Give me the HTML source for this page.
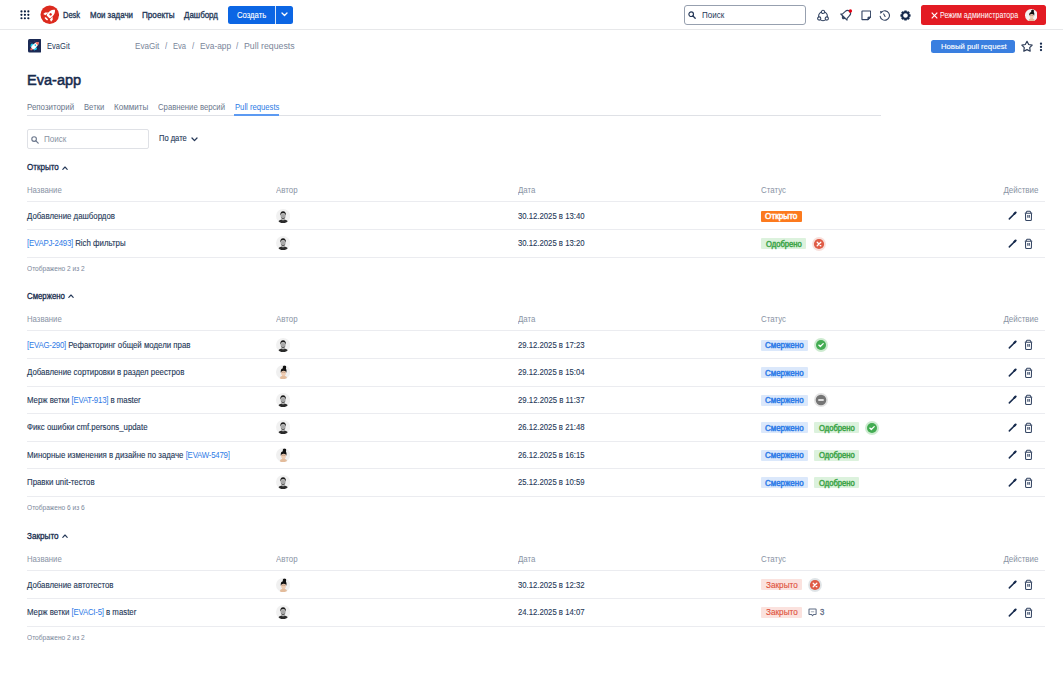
<!DOCTYPE html><html><head><meta charset="utf-8"><style>
*{box-sizing:border-box;margin:0;padding:0}
html,body{width:1063px;height:692px;overflow:hidden;background:#fff;font-family:"Liberation Sans",sans-serif;color:#172b4d}
.t{position:absolute;white-space:nowrap}
.a{position:absolute}
.ln{position:absolute;left:27px;width:1018px;height:1px;background:#ebecf0}
.lz{position:absolute;height:11px;border-radius:1px}
</style></head><body>
<div class="a" style="left:0;top:29px;width:1063px;height:1px;background:#e7e8ea"></div>
<svg class="a" style="left:19.5px;top:10px" width="10" height="10" viewBox="0 0 10 10" fill="#091e42"><circle cx="1.45" cy="1.47" r="1.1"/><circle cx="1.45" cy="4.86" r="1.1"/><circle cx="1.45" cy="8.25" r="1.1"/><circle cx="4.90" cy="1.47" r="1.1"/><circle cx="4.90" cy="4.86" r="1.1"/><circle cx="4.90" cy="8.25" r="1.1"/><circle cx="8.35" cy="1.47" r="1.1"/><circle cx="8.35" cy="4.86" r="1.1"/><circle cx="8.35" cy="8.25" r="1.1"/></svg>
<svg class="a" style="left:39.5px;top:5px" width="19.5" height="19.5" viewBox="0 0 20 20">
<circle cx="10" cy="10" r="9.5" fill="#dc2a1e"/>
<g transform="translate(8.6 11.9) rotate(44)" fill="#fff">
<path d="M0 -9.6 C2.7 -7.8 3.4 -4.2 2.7 -0.6 Q2.5 0.5 1.6 0.5 L-1.6 0.5 Q-2.5 0.5 -2.7 -0.6 C-3.4 -4.2 -2.7 -7.8 0 -9.6 Z"/>
<path d="M-3.0 -3.0 L-5.4 -0.8 L-5.6 1.8 L-3.2 1.0 Z"/>
<path d="M3.0 -3.0 L5.4 -0.8 L5.6 1.8 L3.2 1.0 Z"/>
<rect x="-1.9" y="2.3" width="3.8" height="1.5" rx=".6"/>
<circle cx="0" cy="-3.3" r="1.3" fill="#dc2a1e"/>
</g>
</svg>
<div class="t" style="left:63.2px;transform-origin:left top;top:10.74px;font-size:8.532px;line-height:9.81px;color:#253858;font-weight:normal;transform:scaleX(0.8812);-webkit-text-stroke:0.32px #253858;">Desk</div>
<div class="t" style="left:90px;transform-origin:left top;top:10.74px;font-size:8.532px;line-height:9.81px;color:#253858;font-weight:normal;transform:scaleX(0.9244);-webkit-text-stroke:0.32px #253858;">Мои задачи</div>
<div class="t" style="left:142.4px;transform-origin:left top;top:10.74px;font-size:8.532px;line-height:9.81px;color:#253858;font-weight:normal;transform:scaleX(0.9540);-webkit-text-stroke:0.32px #253858;">Проекты</div>
<div class="t" style="left:184px;transform-origin:left top;top:10.74px;font-size:8.532px;line-height:9.81px;color:#253858;font-weight:normal;transform:scaleX(0.9323);-webkit-text-stroke:0.32px #253858;">Дашборд</div>
<div class="a" style="left:227.5px;top:6px;width:65.5px;height:17.5px;background:#0c66e4;border-radius:2.5px"></div>
<div class="a" style="left:275px;top:6px;width:1px;height:17.5px;background:#fff;opacity:.85"></div>
<div class="t" style="left:236.7px;transform-origin:left top;top:10.64px;font-size:8.532px;line-height:9.81px;color:#fff;font-weight:normal;transform:scaleX(0.9019);-webkit-text-stroke:0.1px #fff;">Создать</div>
<svg class="a" style="left:281px;top:12px" width="7" height="5" viewBox="0 0 7 5"><path d="M1 1 L3.5 3.5 L6 1" fill="none" stroke="#fff" stroke-width="1.3" stroke-linecap="round" stroke-linejoin="round"/></svg>
<div class="a" style="left:683.5px;top:5px;width:122.3px;height:19.5px;border:1px solid #97a0af;border-radius:3px"></div>
<svg class="a" style="left:688px;top:10.5px" width="8" height="8" viewBox="0 0 8 8"><circle cx="3.2" cy="3.2" r="2.3" fill="none" stroke="#253858" stroke-width="1.2"/><path d="M5 5 L7.2 7.2" stroke="#253858" stroke-width="1.3" stroke-linecap="round"/></svg>
<div class="t" style="left:701.7px;transform-origin:left top;top:10.54px;font-size:8.532px;line-height:9.81px;color:#253858;font-weight:normal;transform:scaleX(0.9403);">Поиск</div>
<svg class="a" style="left:816px;top:8.5px" width="14" height="13" viewBox="0 0 14 13" fill="none" stroke="#344563" stroke-width="1.1">
<circle cx="7" cy="7.3" r="4.4"/>
<circle cx="7" cy="2.9" r="1.6" fill="#fff"/><circle cx="3.2" cy="9.5" r="1.6" fill="#fff"/><circle cx="10.8" cy="9.5" r="1.6" fill="#fff"/>
</svg>
<svg class="a" style="left:839px;top:7.5px" width="14" height="14" viewBox="-7 -7 14 14">
<g transform="rotate(45)">
<path d="M-4.4 3 L-3.2 1.6 L-3 -2 Q-3 -5 0 -5.2 Q3 -5 3 -2 L3.2 1.6 L4.4 3 Z" fill="none" stroke="#344563" stroke-width="1.1" stroke-linejoin="round"/>
<path d="M-2.6 2.5 L2.6 2.5 Q1.6 5.4 0 5.4 Q-1.6 5.4 -2.6 2.5 Z" fill="#344563"/>
</g>
<circle cx="4.4" cy="-4" r="1.7" fill="#e60012"/>
</svg>
<svg class="a" style="left:860.6px;top:10.1px" width="10.6" height="10.6" viewBox="0 0 11 11" fill="none" stroke="#344563" stroke-width="1.15" stroke-linejoin="round">
<path d="M1 1.5 Q1 1 1.5 1 L9.5 1 Q10 1 10 1.5 L10 7.2 L7.2 10 L1.5 10 Q1 10 1 9.5 Z"/>
<path d="M10 7.2 L7.4 7.6 L7.2 10 Z" fill="#344563"/>
</svg>
<svg class="a" style="left:879px;top:9.7px" width="12" height="12" viewBox="0 0 12 12" fill="none" stroke="#344563" stroke-width="1.1" stroke-linecap="round">
<path d="M2.48 2.18 A4.7 4.7 0 1 1 1.17 6.32"/>
<path d="M1.0 1.0 L3.7 1.7 L1.5 3.9 Z" fill="#344563" stroke="none"/>
<path d="M4.7 3.9 L6.1 6.5"/>
</svg>
<svg class="a" style="left:899.5px;top:9.5px" width="11" height="11" viewBox="-5.5 -5.5 11 11"><g fill="#172b4d"><rect x="-1.25" y="-5.1" width="2.5" height="2.4" rx=".4" transform="rotate(0)"/><rect x="-1.25" y="-5.1" width="2.5" height="2.4" rx=".4" transform="rotate(45)"/><rect x="-1.25" y="-5.1" width="2.5" height="2.4" rx=".4" transform="rotate(90)"/><rect x="-1.25" y="-5.1" width="2.5" height="2.4" rx=".4" transform="rotate(135)"/><rect x="-1.25" y="-5.1" width="2.5" height="2.4" rx=".4" transform="rotate(180)"/><rect x="-1.25" y="-5.1" width="2.5" height="2.4" rx=".4" transform="rotate(225)"/><rect x="-1.25" y="-5.1" width="2.5" height="2.4" rx=".4" transform="rotate(270)"/><rect x="-1.25" y="-5.1" width="2.5" height="2.4" rx=".4" transform="rotate(315)"/></g><circle r="3.3" fill="none" stroke="#172b4d" stroke-width="1.9"/></svg>
<div class="a" style="left:921px;top:5px;width:124.5px;height:20px;background:#e31b23;border-radius:2.5px"></div>
<svg class="a" style="left:931px;top:11.5px" width="7" height="7" viewBox="0 0 7 7"><path d="M.7 .7 L6.3 6.3 M6.3 .7 L.7 6.3" stroke="#fff" stroke-width="1.2"/></svg>
<div class="t" style="left:940.4px;transform-origin:left top;top:10.74px;font-size:8.208px;line-height:9.44px;color:#fff;font-weight:normal;transform:scaleX(0.8666);">Режим администратора</div>
<svg class="a" style="left:1024.9px;top:8.5px" width="12.6" height="12.6" viewBox="0 0 14 14">
<defs><clipPath id="cw103114"><circle cx="7" cy="7" r="7"/></clipPath></defs>
<g clip-path="url(#cw103114)"><rect width="14" height="14" fill="#f4f4f4"/>
<path d="M3.4 14.2 Q3.8 10.9 6.2 10.5 L8.6 10.5 Q11 10.9 11.2 14.2 Z" fill="#e3bc9c"/>
<path d="M6.3 8.6 L8.5 8.6 L8.7 11 Q7.4 11.8 6.1 11 Z" fill="#e6bd9d"/>
<ellipse cx="7.4" cy="7.6" rx="2.45" ry="2.9" fill="#efcdb3"/>
<path d="M4.7 7.6 Q4.3 3.6 6.8 3.2 Q6.2 0.8 8.6 0.6 Q10.6 0.9 9.8 3.4 Q10.8 4.6 10.2 7.6 Q9.8 5.4 7.4 5.6 Q5.2 5.6 4.7 7.6 Z" fill="#121212"/>
<path d="M5.6 7.4 Q7.4 6.6 9.2 7.4" fill="none" stroke="#6b4a3a" stroke-width=".35"/>
</g></svg>
<svg class="a" style="left:27.6px;top:39.2px" width="13.6" height="13.6" viewBox="0 0 14 14">
<rect x="0" y="0" width="14" height="14" rx="1.6" fill="#1b2a55"/>
<circle cx="3" cy="3.4" r=".35" fill="#6d7ba8"/><circle cx="11.4" cy="10.8" r=".35" fill="#6d7ba8"/><circle cx="6.8" cy="2" r=".3" fill="#6d7ba8"/>
<g transform="translate(6.9 7.1) rotate(45)">
<path d="M-2.8 1.4 L-3.6 3.6 L-1.2 3.2 Z M2.8 1.4 L3.6 3.6 L1.2 3.2 Z" fill="#19c6e6"/>
<circle cx="-2.5" cy="1.3" r="1.5" fill="#19c6e6"/><circle cx="2.5" cy="1.3" r="1.5" fill="#19c6e6"/>
<path d="M0 -5.6 C1.9 -4.4 2.3 -1.2 2.0 2.6 L1.2 4.0 L-1.2 4.0 L-2.0 2.6 C-2.3 -1.2 -1.9 -4.4 0 -5.6 Z" fill="#fff"/>
<path d="M0 -5.6 C1.3 -4.8 1.8 -3.6 1.9 -2.8 L-1.9 -2.8 C-1.8 -3.6 -1.3 -4.8 0 -5.6 Z" fill="#f36a5a"/>
<path d="M-1.3 4.0 L1.3 4.0 L0.6 6.0 L-0.6 6.0 Z" fill="#f36a5a"/>
<circle cx="0" cy="-1" r=".9" fill="#19c6e6"/>
</g>
</svg>
<div class="t" style="left:46.95px;transform-origin:left top;top:42.14px;font-size:8.64px;line-height:9.94px;color:#253858;font-weight:normal;transform:scaleX(0.8787);">EvaGit</div>
<div class="t" style="left:134.8px;transform-origin:left top;top:40.94px;font-size:8.748px;line-height:10.06px;color:#7a869a;font-weight:normal;transform:scaleX(0.9268);">EvaGit</div>
<div class="t" style="left:164.9px;transform-origin:left top;top:40.94px;font-size:8.748px;line-height:10.06px;color:#7a869a;font-weight:normal;transform:scaleX(0.9259);">/</div>
<div class="t" style="left:172.9px;transform-origin:left top;top:40.94px;font-size:8.748px;line-height:10.06px;color:#7a869a;font-weight:normal;transform:scaleX(0.8697);">Eva</div>
<div class="t" style="left:192.1px;transform-origin:left top;top:40.94px;font-size:8.748px;line-height:10.06px;color:#7a869a;font-weight:normal;transform:scaleX(0.9259);">/</div>
<div class="t" style="left:199.9px;transform-origin:left top;top:40.94px;font-size:8.748px;line-height:10.06px;color:#7a869a;font-weight:normal;transform:scaleX(0.9586);">Eva-app</div>
<div class="t" style="left:236.1px;transform-origin:left top;top:40.94px;font-size:8.748px;line-height:10.06px;color:#7a869a;font-weight:normal;transform:scaleX(0.9259);">/</div>
<div class="t" style="left:244.4px;transform-origin:left top;top:40.94px;font-size:8.748px;line-height:10.06px;color:#7a869a;font-weight:normal;transform:scaleX(1.0040);">Pull requests</div>
<div class="a" style="left:931.2px;top:39.7px;width:84px;height:13.2px;background:#3a7fe0;border-radius:2.5px"></div>
<div class="t" style="left:940.6px;transform-origin:left top;top:41.74px;font-size:7.992px;line-height:9.19px;color:#fff;font-weight:normal;transform:scaleX(0.9640);-webkit-text-stroke:0.12px #fff;">Новый pull request</div>
<svg class="a" style="left:1020.9px;top:40px" width="12" height="13" viewBox="0 0 12 13"><path d="M6.00 1.32 L7.68 4.46 L11.18 5.09 L8.71 7.65 L9.20 11.18 L6.00 9.62 L2.80 11.18 L3.29 7.65 L0.82 5.09 L4.32 4.46 Z" fill="none" stroke="#2b3a55" stroke-width="1.15" stroke-linejoin="round"/></svg>
<svg class="a" style="left:1038.55px;top:41.5px" width="4" height="10" viewBox="0 0 4 10" fill="#172b4d"><circle cx="2" cy="1.7" r="1.15"/><circle cx="2" cy="4.9" r="1.15"/><circle cx="2" cy="8.05" r="1.15"/></svg>
<div class="t" style="left:27.4px;transform-origin:left top;top:70.97px;font-size:15.228px;line-height:17.51px;color:#172b4d;font-weight:normal;transform:scaleX(0.9561);-webkit-text-stroke:0.55px #172b4d;">Eva-app</div>
<div class="t" style="left:26.9px;transform-origin:left top;top:102.84px;font-size:8.64px;line-height:9.94px;color:#6b778c;font-weight:normal;transform:scaleX(0.9162);">Репозиторий</div>
<div class="t" style="left:83.5px;transform-origin:left top;top:102.84px;font-size:8.64px;line-height:9.94px;color:#6b778c;font-weight:normal;transform:scaleX(0.8899);">Ветки</div>
<div class="t" style="left:114px;transform-origin:left top;top:102.84px;font-size:8.64px;line-height:9.94px;color:#6b778c;font-weight:normal;transform:scaleX(0.9357);">Коммиты</div>
<div class="t" style="left:158px;transform-origin:left top;top:102.84px;font-size:8.64px;line-height:9.94px;color:#6b778c;font-weight:normal;transform:scaleX(0.8961);">Сравнение версий</div>
<div class="t" style="left:234.6px;transform-origin:left top;top:102.84px;font-size:8.64px;line-height:9.94px;color:#2d7be5;font-weight:normal;transform:scaleX(0.8905);">Pull requests</div>
<div class="a" style="left:27px;top:114.5px;width:854px;height:1px;background:#dfe1e6"></div>
<div class="a" style="left:234.3px;top:114px;width:45.2px;height:1.5px;background:#5c9af2"></div>
<div class="a" style="left:26.6px;top:129px;width:122px;height:20px;border:1px solid #dfe1e6;border-radius:2px"></div>
<svg class="a" style="left:30.5px;top:135.5px" width="8" height="8" viewBox="0 0 8 8"><circle cx="3.1" cy="3.1" r="2.3" fill="none" stroke="#6b778c" stroke-width="1.1"/><path d="M4.9 4.9 L7.2 7.2" stroke="#6b778c" stroke-width="1.2" stroke-linecap="round"/></svg>
<div class="t" style="left:43.5px;transform-origin:left top;top:133.94px;font-size:8.748px;line-height:10.06px;color:#8993a4;font-weight:normal;transform:scaleX(0.9259);">Поиск</div>
<div class="t" style="left:158.8px;transform-origin:left top;top:134.28px;font-size:8.154px;line-height:9.38px;color:#253858;font-weight:normal;transform:scaleX(0.9259);-webkit-text-stroke:0.12px #253858;">По дате</div>
<svg class="a" style="left:190.5px;top:136.5px" width="7" height="5" viewBox="0 0 7 5"><path d="M1 1 L3.5 3.6 L6 1" fill="none" stroke="#253858" stroke-width="1.3" stroke-linecap="round" stroke-linejoin="round"/></svg>
<div class="t" style="left:27px;transform-origin:left top;top:162.94px;font-size:8.424px;line-height:9.69px;color:#172b4d;font-weight:normal;transform:scaleX(0.9573);-webkit-text-stroke:0.3px #172b4d;">Открыто</div>
<svg class="a" style="left:62.199999999999996px;top:165.5px" width="6" height="4" viewBox="0 0 6 4"><path d="M0.8 3.3 L3 1.0 L5.2 3.3" fill="none" stroke="#253858" stroke-width="1.15" stroke-linecap="round" stroke-linejoin="round"/></svg>
<div class="t" style="left:26.9px;transform-origin:left top;top:186.44px;font-size:8.532px;line-height:9.81px;color:#8993a4;font-weight:normal;transform:scaleX(0.9117);">Название</div>
<div class="t" style="left:275.8px;transform-origin:left top;top:186.44px;font-size:8.532px;line-height:9.81px;color:#8993a4;font-weight:normal;transform:scaleX(0.9259);">Автор</div>
<div class="t" style="left:518.2px;transform-origin:left top;top:186.44px;font-size:8.532px;line-height:9.81px;color:#8993a4;font-weight:normal;transform:scaleX(0.9259);">Дата</div>
<div class="t" style="left:761px;transform-origin:left top;top:186.44px;font-size:8.532px;line-height:9.81px;color:#8993a4;font-weight:normal;transform:scaleX(0.9259);">Статус</div>
<div class="t" style="right:24.59999999999991px;transform-origin:right top;top:186.44px;font-size:8.532px;line-height:9.81px;color:#8993a4;font-weight:normal;transform:scaleX(0.9349);">Действие</div>
<div class="ln" style="top:201.20px"></div>
<div class="t" style="left:27px;transform-origin:left top;top:211.89px;font-size:8.478px;line-height:9.75px;color:#253858;font-weight:normal;transform:scaleX(0.9259);-webkit-text-stroke:0.12px #253858;">Добавление дашбордов</div>
<svg class="a" style="left:275.59999999999997px;top:208.70000000000002px" width="14.2" height="14.2" viewBox="0 0 14 14">
<defs><clipPath id="cm282215"><circle cx="7" cy="7" r="7"/></clipPath></defs>
<g clip-path="url(#cm282215)"><rect width="14" height="14" fill="#f1f1f1"/>
<path d="M2.0 13.4 Q2.4 10.9 5.6 10.4 L8.4 10.4 Q11.6 10.9 12.0 13.4 Q7 15.2 2.0 13.4 Z" fill="#2b2b2b"/>
<path d="M5.8 9 L8.2 9 L8.4 10.8 Q7 11.6 5.6 10.8 Z" fill="#b5b5b5"/>
<ellipse cx="7" cy="6.6" rx="2.45" ry="3.0" fill="#a8a8a8"/>
<path d="M4.2 6.4 Q3.9 2.2 7 2.1 Q10.1 2.2 9.8 6.4 Q9.4 4.4 7 4.5 Q4.6 4.4 4.2 6.4 Z" fill="#1c1c1c"/>
<path d="M5.0 4.6 Q7 3.8 9.0 4.6 L9 5.3 Q7 4.8 5 5.3Z" fill="#e8e8e8"/>
<path d="M4.9 7.8 Q7 10.4 9.1 7.8 Q8.8 9.8 7 9.9 Q5.2 9.8 4.9 7.8Z" fill="#3a3a3a"/>
</g></svg>
<div class="t" style="left:518.3px;transform-origin:left top;top:211.88px;font-size:8.37px;line-height:9.63px;color:#253858;font-weight:normal;transform:scaleX(0.9256);-webkit-text-stroke:0.1px #253858;">30.12.2025 в 13:40</div>
<div class="lz" style="left:761px;top:210.60px;width:41px;background:#fc7a1e"></div>
<div class="t" style="left:765.3px;transform-origin:left top;top:212.14px;font-size:8.316px;line-height:9.56px;color:#fff;font-weight:normal;transform:scaleX(0.9879);-webkit-text-stroke:0.48px #fff;">Открыто</div>
<svg class="a" style="left:1007.5px;top:211.30px" width="9" height="9" viewBox="0 0 9 9"><path d="M1.3 7.9 L7.2 2.0" stroke="#172b4d" stroke-width="1.5" stroke-linecap="round"/><path d="M6.4 2.8 L7.6 1.6" stroke="#172b4d" stroke-width="2.1" stroke-linecap="round"/></svg>
<svg class="a" style="left:1024px;top:210.30px" width="9" height="11" viewBox="0 0 9 11" fill="none" stroke="#344563" stroke-width="1.05" stroke-linejoin="round">
<path d="M.8 3.2 L8.2 3.2 M1.8 3.0 L3.0 1.3 L6.0 1.3 L7.2 3.0"/>
<path d="M1.5 3.4 L1.6 9.6 Q1.7 10.4 2.5 10.4 L6.5 10.4 Q7.3 10.4 7.4 9.6 L7.5 3.4"/>
<path d="M3.3 5.0 L3.3 7.8 H4.3 V5.0 Z M4.8 5.0 L4.8 7.8 H5.8 V5.0 Z" fill="#344563" stroke="none"/>
</svg>
<div class="ln" style="top:229.30px"></div>
<div class="t" style="left:27px;transform-origin:left top;top:239.39px;font-size:8.478px;line-height:9.75px;color:#253858;font-weight:normal;transform:scaleX(0.9259);-webkit-text-stroke:0.12px #253858;"><span style="color:#2f7be6;-webkit-text-stroke:0;letter-spacing:-0.24px">[EVAPJ-2493]</span> Rich фильтры</div>
<svg class="a" style="left:275.59999999999997px;top:236.20000000000002px" width="14.2" height="14.2" viewBox="0 0 14 14">
<defs><clipPath id="cm282243"><circle cx="7" cy="7" r="7"/></clipPath></defs>
<g clip-path="url(#cm282243)"><rect width="14" height="14" fill="#f1f1f1"/>
<path d="M2.0 13.4 Q2.4 10.9 5.6 10.4 L8.4 10.4 Q11.6 10.9 12.0 13.4 Q7 15.2 2.0 13.4 Z" fill="#2b2b2b"/>
<path d="M5.8 9 L8.2 9 L8.4 10.8 Q7 11.6 5.6 10.8 Z" fill="#b5b5b5"/>
<ellipse cx="7" cy="6.6" rx="2.45" ry="3.0" fill="#a8a8a8"/>
<path d="M4.2 6.4 Q3.9 2.2 7 2.1 Q10.1 2.2 9.8 6.4 Q9.4 4.4 7 4.5 Q4.6 4.4 4.2 6.4 Z" fill="#1c1c1c"/>
<path d="M5.0 4.6 Q7 3.8 9.0 4.6 L9 5.3 Q7 4.8 5 5.3Z" fill="#e8e8e8"/>
<path d="M4.9 7.8 Q7 10.4 9.1 7.8 Q8.8 9.8 7 9.9 Q5.2 9.8 4.9 7.8Z" fill="#3a3a3a"/>
</g></svg>
<div class="t" style="left:518.3px;transform-origin:left top;top:239.38px;font-size:8.37px;line-height:9.63px;color:#253858;font-weight:normal;transform:scaleX(0.9256);-webkit-text-stroke:0.1px #253858;">30.12.2025 в 13:20</div>
<div class="lz" style="left:761px;top:238.10px;width:45px;background:#dcf2dd"></div>
<div class="t" style="left:765.6px;transform-origin:left top;top:239.64px;font-size:8.316px;line-height:9.56px;color:#3ea54a;font-weight:normal;transform:scaleX(0.9202);-webkit-text-stroke:0.48px #3ea54a;">Одобрено</div>
<svg class="a" style="left:811.5px;top:236.70000000000002px" width="14" height="14" viewBox="0 0 14 14"><circle cx="7" cy="7" r="6.9" fill="#f8e0dc"/><circle cx="7" cy="7" r="5.1" fill="#df5b45"/><path d="M5.2 5.2 L8.8 8.8 M8.8 5.2 L5.2 8.8" stroke="#fff" stroke-width="1.3" stroke-linecap="round"/></svg>
<svg class="a" style="left:1007.5px;top:238.80px" width="9" height="9" viewBox="0 0 9 9"><path d="M1.3 7.9 L7.2 2.0" stroke="#172b4d" stroke-width="1.5" stroke-linecap="round"/><path d="M6.4 2.8 L7.6 1.6" stroke="#172b4d" stroke-width="2.1" stroke-linecap="round"/></svg>
<svg class="a" style="left:1024px;top:237.80px" width="9" height="11" viewBox="0 0 9 11" fill="none" stroke="#344563" stroke-width="1.05" stroke-linejoin="round">
<path d="M.8 3.2 L8.2 3.2 M1.8 3.0 L3.0 1.3 L6.0 1.3 L7.2 3.0"/>
<path d="M1.5 3.4 L1.6 9.6 Q1.7 10.4 2.5 10.4 L6.5 10.4 Q7.3 10.4 7.4 9.6 L7.5 3.4"/>
<path d="M3.3 5.0 L3.3 7.8 H4.3 V5.0 Z M4.8 5.0 L4.8 7.8 H5.8 V5.0 Z" fill="#344563" stroke="none"/>
</svg>
<div class="ln" style="top:256.80px"></div>
<div class="t" style="left:26.9px;transform-origin:left top;top:265.28px;font-size:7.074px;line-height:8.14px;color:#7a869a;font-weight:normal;transform:scaleX(0.9339);">Отображено 2 из 2</div>
<div class="t" style="left:27px;transform-origin:left top;top:291.84px;font-size:8.424px;line-height:9.69px;color:#172b4d;font-weight:normal;transform:scaleX(0.9283);-webkit-text-stroke:0.3px #172b4d;">Смержено</div>
<svg class="a" style="left:68.30000000000001px;top:294.4px" width="6" height="4" viewBox="0 0 6 4"><path d="M0.8 3.3 L3 1.0 L5.2 3.3" fill="none" stroke="#253858" stroke-width="1.15" stroke-linecap="round" stroke-linejoin="round"/></svg>
<div class="t" style="left:26.9px;transform-origin:left top;top:315.34px;font-size:8.532px;line-height:9.81px;color:#8993a4;font-weight:normal;transform:scaleX(0.9117);">Название</div>
<div class="t" style="left:275.8px;transform-origin:left top;top:315.34px;font-size:8.532px;line-height:9.81px;color:#8993a4;font-weight:normal;transform:scaleX(0.9259);">Автор</div>
<div class="t" style="left:518.2px;transform-origin:left top;top:315.34px;font-size:8.532px;line-height:9.81px;color:#8993a4;font-weight:normal;transform:scaleX(0.9259);">Дата</div>
<div class="t" style="left:761px;transform-origin:left top;top:315.34px;font-size:8.532px;line-height:9.81px;color:#8993a4;font-weight:normal;transform:scaleX(0.9259);">Статус</div>
<div class="t" style="right:24.59999999999991px;transform-origin:right top;top:315.34px;font-size:8.532px;line-height:9.81px;color:#8993a4;font-weight:normal;transform:scaleX(0.9349);">Действие</div>
<div class="ln" style="top:330.10px"></div>
<div class="t" style="left:27px;transform-origin:left top;top:340.79px;font-size:8.478px;line-height:9.75px;color:#253858;font-weight:normal;transform:scaleX(0.9259);-webkit-text-stroke:0.12px #253858;"><span style="color:#2f7be6;-webkit-text-stroke:0;letter-spacing:-0.24px">[EVAG-290]</span> Рефакторинг общей модели прав</div>
<svg class="a" style="left:275.59999999999997px;top:337.59999999999997px" width="14.2" height="14.2" viewBox="0 0 14 14">
<defs><clipPath id="cm282344"><circle cx="7" cy="7" r="7"/></clipPath></defs>
<g clip-path="url(#cm282344)"><rect width="14" height="14" fill="#f1f1f1"/>
<path d="M2.0 13.4 Q2.4 10.9 5.6 10.4 L8.4 10.4 Q11.6 10.9 12.0 13.4 Q7 15.2 2.0 13.4 Z" fill="#2b2b2b"/>
<path d="M5.8 9 L8.2 9 L8.4 10.8 Q7 11.6 5.6 10.8 Z" fill="#b5b5b5"/>
<ellipse cx="7" cy="6.6" rx="2.45" ry="3.0" fill="#a8a8a8"/>
<path d="M4.2 6.4 Q3.9 2.2 7 2.1 Q10.1 2.2 9.8 6.4 Q9.4 4.4 7 4.5 Q4.6 4.4 4.2 6.4 Z" fill="#1c1c1c"/>
<path d="M5.0 4.6 Q7 3.8 9.0 4.6 L9 5.3 Q7 4.8 5 5.3Z" fill="#e8e8e8"/>
<path d="M4.9 7.8 Q7 10.4 9.1 7.8 Q8.8 9.8 7 9.9 Q5.2 9.8 4.9 7.8Z" fill="#3a3a3a"/>
</g></svg>
<div class="t" style="left:518.3px;transform-origin:left top;top:340.78px;font-size:8.37px;line-height:9.63px;color:#253858;font-weight:normal;transform:scaleX(0.9256);-webkit-text-stroke:0.1px #253858;">29.12.2025 в 17:23</div>
<div class="lz" style="left:761px;top:339.50px;width:47.4px;background:#dbe8fb"></div>
<div class="t" style="left:765.4px;transform-origin:left top;top:341.04px;font-size:8.316px;line-height:9.56px;color:#2e7ce8;font-weight:normal;transform:scaleX(0.9579);-webkit-text-stroke:0.48px #2e7ce8;">Смержено</div>
<svg class="a" style="left:813.9000000000001px;top:338.09999999999997px" width="14" height="14" viewBox="0 0 14 14"><circle cx="7" cy="7" r="7" fill="#cdebd0"/><circle cx="7" cy="7" r="5.0" fill="#43ac52"/><path d="M4.8 7.1 L6.3 8.5 L9.2 5.6" fill="none" stroke="#fff" stroke-width="1.3" stroke-linecap="round" stroke-linejoin="round"/></svg>
<svg class="a" style="left:1007.5px;top:340.20px" width="9" height="9" viewBox="0 0 9 9"><path d="M1.3 7.9 L7.2 2.0" stroke="#172b4d" stroke-width="1.5" stroke-linecap="round"/><path d="M6.4 2.8 L7.6 1.6" stroke="#172b4d" stroke-width="2.1" stroke-linecap="round"/></svg>
<svg class="a" style="left:1024px;top:339.20px" width="9" height="11" viewBox="0 0 9 11" fill="none" stroke="#344563" stroke-width="1.05" stroke-linejoin="round">
<path d="M.8 3.2 L8.2 3.2 M1.8 3.0 L3.0 1.3 L6.0 1.3 L7.2 3.0"/>
<path d="M1.5 3.4 L1.6 9.6 Q1.7 10.4 2.5 10.4 L6.5 10.4 Q7.3 10.4 7.4 9.6 L7.5 3.4"/>
<path d="M3.3 5.0 L3.3 7.8 H4.3 V5.0 Z M4.8 5.0 L4.8 7.8 H5.8 V5.0 Z" fill="#344563" stroke="none"/>
</svg>
<div class="ln" style="top:358.20px"></div>
<div class="t" style="left:27px;transform-origin:left top;top:368.29px;font-size:8.478px;line-height:9.75px;color:#253858;font-weight:normal;transform:scaleX(0.9259);-webkit-text-stroke:0.12px #253858;">Добавление сортировки в раздел реестров</div>
<svg class="a" style="left:275.59999999999997px;top:365.09999999999997px" width="14.2" height="14.2" viewBox="0 0 14 14">
<defs><clipPath id="cw282372"><circle cx="7" cy="7" r="7"/></clipPath></defs>
<g clip-path="url(#cw282372)"><rect width="14" height="14" fill="#f0f0f0"/>
<path d="M3.4 14.2 Q3.8 10.9 6.2 10.5 L8.6 10.5 Q11 10.9 11.2 14.2 Z" fill="#e3bc9c"/>
<path d="M6.3 8.6 L8.5 8.6 L8.7 11 Q7.4 11.8 6.1 11 Z" fill="#e6bd9d"/>
<ellipse cx="7.4" cy="7.6" rx="2.45" ry="2.9" fill="#efcdb3"/>
<path d="M4.7 7.6 Q4.3 3.6 6.8 3.2 Q6.2 0.8 8.6 0.6 Q10.6 0.9 9.8 3.4 Q10.8 4.6 10.2 7.6 Q9.8 5.4 7.4 5.6 Q5.2 5.6 4.7 7.6 Z" fill="#121212"/>
<path d="M5.6 7.4 Q7.4 6.6 9.2 7.4" fill="none" stroke="#6b4a3a" stroke-width=".35"/>
</g></svg>
<div class="t" style="left:518.3px;transform-origin:left top;top:368.28px;font-size:8.37px;line-height:9.63px;color:#253858;font-weight:normal;transform:scaleX(0.9256);-webkit-text-stroke:0.1px #253858;">29.12.2025 в 15:04</div>
<div class="lz" style="left:761px;top:367.00px;width:47.4px;background:#dbe8fb"></div>
<div class="t" style="left:765.4px;transform-origin:left top;top:368.54px;font-size:8.316px;line-height:9.56px;color:#2e7ce8;font-weight:normal;transform:scaleX(0.9579);-webkit-text-stroke:0.48px #2e7ce8;">Смержено</div>
<svg class="a" style="left:1007.5px;top:367.70px" width="9" height="9" viewBox="0 0 9 9"><path d="M1.3 7.9 L7.2 2.0" stroke="#172b4d" stroke-width="1.5" stroke-linecap="round"/><path d="M6.4 2.8 L7.6 1.6" stroke="#172b4d" stroke-width="2.1" stroke-linecap="round"/></svg>
<svg class="a" style="left:1024px;top:366.70px" width="9" height="11" viewBox="0 0 9 11" fill="none" stroke="#344563" stroke-width="1.05" stroke-linejoin="round">
<path d="M.8 3.2 L8.2 3.2 M1.8 3.0 L3.0 1.3 L6.0 1.3 L7.2 3.0"/>
<path d="M1.5 3.4 L1.6 9.6 Q1.7 10.4 2.5 10.4 L6.5 10.4 Q7.3 10.4 7.4 9.6 L7.5 3.4"/>
<path d="M3.3 5.0 L3.3 7.8 H4.3 V5.0 Z M4.8 5.0 L4.8 7.8 H5.8 V5.0 Z" fill="#344563" stroke="none"/>
</svg>
<div class="ln" style="top:385.70px"></div>
<div class="t" style="left:27px;transform-origin:left top;top:395.79px;font-size:8.478px;line-height:9.75px;color:#253858;font-weight:normal;transform:scaleX(0.9259);-webkit-text-stroke:0.12px #253858;">Мерж ветки <span style="color:#2f7be6;-webkit-text-stroke:0;letter-spacing:-0.24px">[EVAT-913]</span> в master</div>
<svg class="a" style="left:275.59999999999997px;top:392.59999999999997px" width="14.2" height="14.2" viewBox="0 0 14 14">
<defs><clipPath id="cm282399"><circle cx="7" cy="7" r="7"/></clipPath></defs>
<g clip-path="url(#cm282399)"><rect width="14" height="14" fill="#f1f1f1"/>
<path d="M2.0 13.4 Q2.4 10.9 5.6 10.4 L8.4 10.4 Q11.6 10.9 12.0 13.4 Q7 15.2 2.0 13.4 Z" fill="#2b2b2b"/>
<path d="M5.8 9 L8.2 9 L8.4 10.8 Q7 11.6 5.6 10.8 Z" fill="#b5b5b5"/>
<ellipse cx="7" cy="6.6" rx="2.45" ry="3.0" fill="#a8a8a8"/>
<path d="M4.2 6.4 Q3.9 2.2 7 2.1 Q10.1 2.2 9.8 6.4 Q9.4 4.4 7 4.5 Q4.6 4.4 4.2 6.4 Z" fill="#1c1c1c"/>
<path d="M5.0 4.6 Q7 3.8 9.0 4.6 L9 5.3 Q7 4.8 5 5.3Z" fill="#e8e8e8"/>
<path d="M4.9 7.8 Q7 10.4 9.1 7.8 Q8.8 9.8 7 9.9 Q5.2 9.8 4.9 7.8Z" fill="#3a3a3a"/>
</g></svg>
<div class="t" style="left:518.3px;transform-origin:left top;top:395.78px;font-size:8.37px;line-height:9.63px;color:#253858;font-weight:normal;transform:scaleX(0.9335);-webkit-text-stroke:0.1px #253858;">29.12.2025 в 11:37</div>
<div class="lz" style="left:761px;top:394.50px;width:47.4px;background:#dbe8fb"></div>
<div class="t" style="left:765.4px;transform-origin:left top;top:396.04px;font-size:8.316px;line-height:9.56px;color:#2e7ce8;font-weight:normal;transform:scaleX(0.9579);-webkit-text-stroke:0.48px #2e7ce8;">Смержено</div>
<svg class="a" style="left:813.9000000000001px;top:393.09999999999997px" width="14" height="14" viewBox="0 0 14 14"><circle cx="7" cy="7" r="7" fill="#e2e2e2"/><circle cx="7" cy="7" r="5.3" fill="#757575"/><path d="M4.8 7 L9.2 7" stroke="#fff" stroke-width="1.5" stroke-linecap="round"/></svg>
<svg class="a" style="left:1007.5px;top:395.20px" width="9" height="9" viewBox="0 0 9 9"><path d="M1.3 7.9 L7.2 2.0" stroke="#172b4d" stroke-width="1.5" stroke-linecap="round"/><path d="M6.4 2.8 L7.6 1.6" stroke="#172b4d" stroke-width="2.1" stroke-linecap="round"/></svg>
<svg class="a" style="left:1024px;top:394.20px" width="9" height="11" viewBox="0 0 9 11" fill="none" stroke="#344563" stroke-width="1.05" stroke-linejoin="round">
<path d="M.8 3.2 L8.2 3.2 M1.8 3.0 L3.0 1.3 L6.0 1.3 L7.2 3.0"/>
<path d="M1.5 3.4 L1.6 9.6 Q1.7 10.4 2.5 10.4 L6.5 10.4 Q7.3 10.4 7.4 9.6 L7.5 3.4"/>
<path d="M3.3 5.0 L3.3 7.8 H4.3 V5.0 Z M4.8 5.0 L4.8 7.8 H5.8 V5.0 Z" fill="#344563" stroke="none"/>
</svg>
<div class="ln" style="top:413.20px"></div>
<div class="t" style="left:27px;transform-origin:left top;top:423.29px;font-size:8.478px;line-height:9.75px;color:#253858;font-weight:normal;transform:scaleX(0.9259);-webkit-text-stroke:0.12px #253858;">Фикс ошибки cmf.persons_update</div>
<svg class="a" style="left:275.59999999999997px;top:420.09999999999997px" width="14.2" height="14.2" viewBox="0 0 14 14">
<defs><clipPath id="cm282427"><circle cx="7" cy="7" r="7"/></clipPath></defs>
<g clip-path="url(#cm282427)"><rect width="14" height="14" fill="#f1f1f1"/>
<path d="M2.0 13.4 Q2.4 10.9 5.6 10.4 L8.4 10.4 Q11.6 10.9 12.0 13.4 Q7 15.2 2.0 13.4 Z" fill="#2b2b2b"/>
<path d="M5.8 9 L8.2 9 L8.4 10.8 Q7 11.6 5.6 10.8 Z" fill="#b5b5b5"/>
<ellipse cx="7" cy="6.6" rx="2.45" ry="3.0" fill="#a8a8a8"/>
<path d="M4.2 6.4 Q3.9 2.2 7 2.1 Q10.1 2.2 9.8 6.4 Q9.4 4.4 7 4.5 Q4.6 4.4 4.2 6.4 Z" fill="#1c1c1c"/>
<path d="M5.0 4.6 Q7 3.8 9.0 4.6 L9 5.3 Q7 4.8 5 5.3Z" fill="#e8e8e8"/>
<path d="M4.9 7.8 Q7 10.4 9.1 7.8 Q8.8 9.8 7 9.9 Q5.2 9.8 4.9 7.8Z" fill="#3a3a3a"/>
</g></svg>
<div class="t" style="left:518.3px;transform-origin:left top;top:423.28px;font-size:8.37px;line-height:9.63px;color:#253858;font-weight:normal;transform:scaleX(0.9256);-webkit-text-stroke:0.1px #253858;">26.12.2025 в 21:48</div>
<div class="lz" style="left:761px;top:422.00px;width:47.4px;background:#dbe8fb"></div>
<div class="t" style="left:765.4px;transform-origin:left top;top:423.54px;font-size:8.316px;line-height:9.56px;color:#2e7ce8;font-weight:normal;transform:scaleX(0.9579);-webkit-text-stroke:0.48px #2e7ce8;">Смержено</div>
<div class="lz" style="left:814.2px;top:422.00px;width:45px;background:#dcf2dd"></div>
<div class="t" style="left:818.8000000000001px;transform-origin:left top;top:423.54px;font-size:8.316px;line-height:9.56px;color:#3ea54a;font-weight:normal;transform:scaleX(0.9202);-webkit-text-stroke:0.48px #3ea54a;">Одобрено</div>
<svg class="a" style="left:864.7px;top:420.59999999999997px" width="14" height="14" viewBox="0 0 14 14"><circle cx="7" cy="7" r="7" fill="#cdebd0"/><circle cx="7" cy="7" r="5.0" fill="#43ac52"/><path d="M4.8 7.1 L6.3 8.5 L9.2 5.6" fill="none" stroke="#fff" stroke-width="1.3" stroke-linecap="round" stroke-linejoin="round"/></svg>
<svg class="a" style="left:1007.5px;top:422.70px" width="9" height="9" viewBox="0 0 9 9"><path d="M1.3 7.9 L7.2 2.0" stroke="#172b4d" stroke-width="1.5" stroke-linecap="round"/><path d="M6.4 2.8 L7.6 1.6" stroke="#172b4d" stroke-width="2.1" stroke-linecap="round"/></svg>
<svg class="a" style="left:1024px;top:421.70px" width="9" height="11" viewBox="0 0 9 11" fill="none" stroke="#344563" stroke-width="1.05" stroke-linejoin="round">
<path d="M.8 3.2 L8.2 3.2 M1.8 3.0 L3.0 1.3 L6.0 1.3 L7.2 3.0"/>
<path d="M1.5 3.4 L1.6 9.6 Q1.7 10.4 2.5 10.4 L6.5 10.4 Q7.3 10.4 7.4 9.6 L7.5 3.4"/>
<path d="M3.3 5.0 L3.3 7.8 H4.3 V5.0 Z M4.8 5.0 L4.8 7.8 H5.8 V5.0 Z" fill="#344563" stroke="none"/>
</svg>
<div class="ln" style="top:440.70px"></div>
<div class="t" style="left:27px;transform-origin:left top;top:450.79px;font-size:8.478px;line-height:9.75px;color:#253858;font-weight:normal;transform:scaleX(0.9259);-webkit-text-stroke:0.12px #253858;">Минорные изменения в дизайне по задаче <span style="color:#2f7be6;-webkit-text-stroke:0;letter-spacing:-0.24px">[EVAW-5479]</span></div>
<svg class="a" style="left:275.59999999999997px;top:447.59999999999997px" width="14.2" height="14.2" viewBox="0 0 14 14">
<defs><clipPath id="cw282454"><circle cx="7" cy="7" r="7"/></clipPath></defs>
<g clip-path="url(#cw282454)"><rect width="14" height="14" fill="#f0f0f0"/>
<path d="M3.4 14.2 Q3.8 10.9 6.2 10.5 L8.6 10.5 Q11 10.9 11.2 14.2 Z" fill="#e3bc9c"/>
<path d="M6.3 8.6 L8.5 8.6 L8.7 11 Q7.4 11.8 6.1 11 Z" fill="#e6bd9d"/>
<ellipse cx="7.4" cy="7.6" rx="2.45" ry="2.9" fill="#efcdb3"/>
<path d="M4.7 7.6 Q4.3 3.6 6.8 3.2 Q6.2 0.8 8.6 0.6 Q10.6 0.9 9.8 3.4 Q10.8 4.6 10.2 7.6 Q9.8 5.4 7.4 5.6 Q5.2 5.6 4.7 7.6 Z" fill="#121212"/>
<path d="M5.6 7.4 Q7.4 6.6 9.2 7.4" fill="none" stroke="#6b4a3a" stroke-width=".35"/>
</g></svg>
<div class="t" style="left:518.3px;transform-origin:left top;top:450.78px;font-size:8.37px;line-height:9.63px;color:#253858;font-weight:normal;transform:scaleX(0.9256);-webkit-text-stroke:0.1px #253858;">26.12.2025 в 16:15</div>
<div class="lz" style="left:761px;top:449.50px;width:47.4px;background:#dbe8fb"></div>
<div class="t" style="left:765.4px;transform-origin:left top;top:451.04px;font-size:8.316px;line-height:9.56px;color:#2e7ce8;font-weight:normal;transform:scaleX(0.9579);-webkit-text-stroke:0.48px #2e7ce8;">Смержено</div>
<div class="lz" style="left:814.2px;top:449.50px;width:45px;background:#dcf2dd"></div>
<div class="t" style="left:818.8000000000001px;transform-origin:left top;top:451.04px;font-size:8.316px;line-height:9.56px;color:#3ea54a;font-weight:normal;transform:scaleX(0.9202);-webkit-text-stroke:0.48px #3ea54a;">Одобрено</div>
<svg class="a" style="left:1007.5px;top:450.20px" width="9" height="9" viewBox="0 0 9 9"><path d="M1.3 7.9 L7.2 2.0" stroke="#172b4d" stroke-width="1.5" stroke-linecap="round"/><path d="M6.4 2.8 L7.6 1.6" stroke="#172b4d" stroke-width="2.1" stroke-linecap="round"/></svg>
<svg class="a" style="left:1024px;top:449.20px" width="9" height="11" viewBox="0 0 9 11" fill="none" stroke="#344563" stroke-width="1.05" stroke-linejoin="round">
<path d="M.8 3.2 L8.2 3.2 M1.8 3.0 L3.0 1.3 L6.0 1.3 L7.2 3.0"/>
<path d="M1.5 3.4 L1.6 9.6 Q1.7 10.4 2.5 10.4 L6.5 10.4 Q7.3 10.4 7.4 9.6 L7.5 3.4"/>
<path d="M3.3 5.0 L3.3 7.8 H4.3 V5.0 Z M4.8 5.0 L4.8 7.8 H5.8 V5.0 Z" fill="#344563" stroke="none"/>
</svg>
<div class="ln" style="top:468.20px"></div>
<div class="t" style="left:27px;transform-origin:left top;top:478.29px;font-size:8.478px;line-height:9.75px;color:#253858;font-weight:normal;transform:scaleX(0.9259);-webkit-text-stroke:0.12px #253858;">Правки unit-тестов</div>
<svg class="a" style="left:275.59999999999997px;top:475.09999999999997px" width="14.2" height="14.2" viewBox="0 0 14 14">
<defs><clipPath id="cm282482"><circle cx="7" cy="7" r="7"/></clipPath></defs>
<g clip-path="url(#cm282482)"><rect width="14" height="14" fill="#f1f1f1"/>
<path d="M2.0 13.4 Q2.4 10.9 5.6 10.4 L8.4 10.4 Q11.6 10.9 12.0 13.4 Q7 15.2 2.0 13.4 Z" fill="#2b2b2b"/>
<path d="M5.8 9 L8.2 9 L8.4 10.8 Q7 11.6 5.6 10.8 Z" fill="#b5b5b5"/>
<ellipse cx="7" cy="6.6" rx="2.45" ry="3.0" fill="#a8a8a8"/>
<path d="M4.2 6.4 Q3.9 2.2 7 2.1 Q10.1 2.2 9.8 6.4 Q9.4 4.4 7 4.5 Q4.6 4.4 4.2 6.4 Z" fill="#1c1c1c"/>
<path d="M5.0 4.6 Q7 3.8 9.0 4.6 L9 5.3 Q7 4.8 5 5.3Z" fill="#e8e8e8"/>
<path d="M4.9 7.8 Q7 10.4 9.1 7.8 Q8.8 9.8 7 9.9 Q5.2 9.8 4.9 7.8Z" fill="#3a3a3a"/>
</g></svg>
<div class="t" style="left:518.3px;transform-origin:left top;top:478.28px;font-size:8.37px;line-height:9.63px;color:#253858;font-weight:normal;transform:scaleX(0.9256);-webkit-text-stroke:0.1px #253858;">25.12.2025 в 10:59</div>
<div class="lz" style="left:761px;top:477.00px;width:47.4px;background:#dbe8fb"></div>
<div class="t" style="left:765.4px;transform-origin:left top;top:478.54px;font-size:8.316px;line-height:9.56px;color:#2e7ce8;font-weight:normal;transform:scaleX(0.9579);-webkit-text-stroke:0.48px #2e7ce8;">Смержено</div>
<div class="lz" style="left:814.2px;top:477.00px;width:45px;background:#dcf2dd"></div>
<div class="t" style="left:818.8000000000001px;transform-origin:left top;top:478.54px;font-size:8.316px;line-height:9.56px;color:#3ea54a;font-weight:normal;transform:scaleX(0.9202);-webkit-text-stroke:0.48px #3ea54a;">Одобрено</div>
<svg class="a" style="left:1007.5px;top:477.70px" width="9" height="9" viewBox="0 0 9 9"><path d="M1.3 7.9 L7.2 2.0" stroke="#172b4d" stroke-width="1.5" stroke-linecap="round"/><path d="M6.4 2.8 L7.6 1.6" stroke="#172b4d" stroke-width="2.1" stroke-linecap="round"/></svg>
<svg class="a" style="left:1024px;top:476.70px" width="9" height="11" viewBox="0 0 9 11" fill="none" stroke="#344563" stroke-width="1.05" stroke-linejoin="round">
<path d="M.8 3.2 L8.2 3.2 M1.8 3.0 L3.0 1.3 L6.0 1.3 L7.2 3.0"/>
<path d="M1.5 3.4 L1.6 9.6 Q1.7 10.4 2.5 10.4 L6.5 10.4 Q7.3 10.4 7.4 9.6 L7.5 3.4"/>
<path d="M3.3 5.0 L3.3 7.8 H4.3 V5.0 Z M4.8 5.0 L4.8 7.8 H5.8 V5.0 Z" fill="#344563" stroke="none"/>
</svg>
<div class="ln" style="top:495.70px"></div>
<div class="t" style="left:26.9px;transform-origin:left top;top:504.18px;font-size:7.074px;line-height:8.14px;color:#7a869a;font-weight:normal;transform:scaleX(0.9339);">Отображено 6 из 6</div>
<div class="t" style="left:27px;transform-origin:left top;top:531.74px;font-size:8.424px;line-height:9.69px;color:#172b4d;font-weight:normal;transform:scaleX(0.9695);-webkit-text-stroke:0.3px #172b4d;">Закрыто</div>
<svg class="a" style="left:62.0px;top:534.3000000000001px" width="6" height="4" viewBox="0 0 6 4"><path d="M0.8 3.3 L3 1.0 L5.2 3.3" fill="none" stroke="#253858" stroke-width="1.15" stroke-linecap="round" stroke-linejoin="round"/></svg>
<div class="t" style="left:26.9px;transform-origin:left top;top:555.24px;font-size:8.532px;line-height:9.81px;color:#8993a4;font-weight:normal;transform:scaleX(0.9117);">Название</div>
<div class="t" style="left:275.8px;transform-origin:left top;top:555.24px;font-size:8.532px;line-height:9.81px;color:#8993a4;font-weight:normal;transform:scaleX(0.9259);">Автор</div>
<div class="t" style="left:518.2px;transform-origin:left top;top:555.24px;font-size:8.532px;line-height:9.81px;color:#8993a4;font-weight:normal;transform:scaleX(0.9259);">Дата</div>
<div class="t" style="left:761px;transform-origin:left top;top:555.24px;font-size:8.532px;line-height:9.81px;color:#8993a4;font-weight:normal;transform:scaleX(0.9259);">Статус</div>
<div class="t" style="right:24.59999999999991px;transform-origin:right top;top:555.24px;font-size:8.532px;line-height:9.81px;color:#8993a4;font-weight:normal;transform:scaleX(0.9349);">Действие</div>
<div class="ln" style="top:570.00px"></div>
<div class="t" style="left:27px;transform-origin:left top;top:580.69px;font-size:8.478px;line-height:9.75px;color:#253858;font-weight:normal;transform:scaleX(0.9259);-webkit-text-stroke:0.12px #253858;">Добавление автотестов</div>
<svg class="a" style="left:275.59999999999997px;top:577.5px" width="14.2" height="14.2" viewBox="0 0 14 14">
<defs><clipPath id="cw282584"><circle cx="7" cy="7" r="7"/></clipPath></defs>
<g clip-path="url(#cw282584)"><rect width="14" height="14" fill="#f0f0f0"/>
<path d="M3.4 14.2 Q3.8 10.9 6.2 10.5 L8.6 10.5 Q11 10.9 11.2 14.2 Z" fill="#e3bc9c"/>
<path d="M6.3 8.6 L8.5 8.6 L8.7 11 Q7.4 11.8 6.1 11 Z" fill="#e6bd9d"/>
<ellipse cx="7.4" cy="7.6" rx="2.45" ry="2.9" fill="#efcdb3"/>
<path d="M4.7 7.6 Q4.3 3.6 6.8 3.2 Q6.2 0.8 8.6 0.6 Q10.6 0.9 9.8 3.4 Q10.8 4.6 10.2 7.6 Q9.8 5.4 7.4 5.6 Q5.2 5.6 4.7 7.6 Z" fill="#121212"/>
<path d="M5.6 7.4 Q7.4 6.6 9.2 7.4" fill="none" stroke="#6b4a3a" stroke-width=".35"/>
</g></svg>
<div class="t" style="left:518.3px;transform-origin:left top;top:580.68px;font-size:8.37px;line-height:9.63px;color:#253858;font-weight:normal;transform:scaleX(0.9256);-webkit-text-stroke:0.1px #253858;">30.12.2025 в 12:32</div>
<div class="lz" style="left:761px;top:579.40px;width:41px;background:#fbe2de"></div>
<div class="t" style="left:765.6px;transform-origin:left top;top:580.94px;font-size:8.316px;line-height:9.56px;color:#e0523c;font-weight:normal;transform:scaleX(0.9889);-webkit-text-stroke:0.12px #e0523c;">Закрыто</div>
<svg class="a" style="left:807.5px;top:578.0px" width="14" height="14" viewBox="0 0 14 14"><circle cx="7" cy="7" r="6.9" fill="#dfe4e7"/><circle cx="7" cy="7" r="5.1" fill="#df5b45"/><path d="M5.2 5.2 L8.8 8.8 M8.8 5.2 L5.2 8.8" stroke="#fff" stroke-width="1.3" stroke-linecap="round"/></svg>
<svg class="a" style="left:1007.5px;top:580.10px" width="9" height="9" viewBox="0 0 9 9"><path d="M1.3 7.9 L7.2 2.0" stroke="#172b4d" stroke-width="1.5" stroke-linecap="round"/><path d="M6.4 2.8 L7.6 1.6" stroke="#172b4d" stroke-width="2.1" stroke-linecap="round"/></svg>
<svg class="a" style="left:1024px;top:579.10px" width="9" height="11" viewBox="0 0 9 11" fill="none" stroke="#344563" stroke-width="1.05" stroke-linejoin="round">
<path d="M.8 3.2 L8.2 3.2 M1.8 3.0 L3.0 1.3 L6.0 1.3 L7.2 3.0"/>
<path d="M1.5 3.4 L1.6 9.6 Q1.7 10.4 2.5 10.4 L6.5 10.4 Q7.3 10.4 7.4 9.6 L7.5 3.4"/>
<path d="M3.3 5.0 L3.3 7.8 H4.3 V5.0 Z M4.8 5.0 L4.8 7.8 H5.8 V5.0 Z" fill="#344563" stroke="none"/>
</svg>
<div class="ln" style="top:598.10px"></div>
<div class="t" style="left:27px;transform-origin:left top;top:608.19px;font-size:8.478px;line-height:9.75px;color:#253858;font-weight:normal;transform:scaleX(0.9259);-webkit-text-stroke:0.12px #253858;">Мерж ветки <span style="color:#2f7be6;-webkit-text-stroke:0;letter-spacing:-0.24px">[EVACI-5]</span> в master</div>
<svg class="a" style="left:275.59999999999997px;top:605.0px" width="14.2" height="14.2" viewBox="0 0 14 14">
<defs><clipPath id="cm282612"><circle cx="7" cy="7" r="7"/></clipPath></defs>
<g clip-path="url(#cm282612)"><rect width="14" height="14" fill="#f1f1f1"/>
<path d="M2.0 13.4 Q2.4 10.9 5.6 10.4 L8.4 10.4 Q11.6 10.9 12.0 13.4 Q7 15.2 2.0 13.4 Z" fill="#2b2b2b"/>
<path d="M5.8 9 L8.2 9 L8.4 10.8 Q7 11.6 5.6 10.8 Z" fill="#b5b5b5"/>
<ellipse cx="7" cy="6.6" rx="2.45" ry="3.0" fill="#a8a8a8"/>
<path d="M4.2 6.4 Q3.9 2.2 7 2.1 Q10.1 2.2 9.8 6.4 Q9.4 4.4 7 4.5 Q4.6 4.4 4.2 6.4 Z" fill="#1c1c1c"/>
<path d="M5.0 4.6 Q7 3.8 9.0 4.6 L9 5.3 Q7 4.8 5 5.3Z" fill="#e8e8e8"/>
<path d="M4.9 7.8 Q7 10.4 9.1 7.8 Q8.8 9.8 7 9.9 Q5.2 9.8 4.9 7.8Z" fill="#3a3a3a"/>
</g></svg>
<div class="t" style="left:518.3px;transform-origin:left top;top:608.18px;font-size:8.37px;line-height:9.63px;color:#253858;font-weight:normal;transform:scaleX(0.9256);-webkit-text-stroke:0.1px #253858;">24.12.2025 в 14:07</div>
<div class="lz" style="left:761px;top:606.90px;width:41px;background:#fbe2de"></div>
<div class="t" style="left:765.6px;transform-origin:left top;top:608.44px;font-size:8.316px;line-height:9.56px;color:#e0523c;font-weight:normal;transform:scaleX(0.9889);-webkit-text-stroke:0.12px #e0523c;">Закрыто</div>
<svg class="a" style="left:808.2px;top:608.00px" width="9" height="9" viewBox="0 0 9 9"><path d="M1 1.5 Q1 1 1.5 1 L7.6 1 Q8.1 1 8.1 1.5 L8.1 6.0 Q8.1 6.5 7.6 6.5 L5.5 6.5 L4.55 7.8 L3.6 6.5 L1.5 6.5 Q1 6.5 1 6.0 Z" fill="none" stroke="#5e6c84" stroke-width="1.05" stroke-linejoin="round"/><path d="M2.9 3.75 L6.2 3.75" stroke="#97a0af" stroke-width=".9"/></svg>
<div class="t" style="left:819.5px;transform-origin:left top;top:607.74px;font-size:8.64px;line-height:9.94px;color:#5e6c84;font-weight:normal;transform:scaleX(0.8964);-webkit-text-stroke:0.3px #5e6c84;">3</div>
<svg class="a" style="left:1007.5px;top:607.60px" width="9" height="9" viewBox="0 0 9 9"><path d="M1.3 7.9 L7.2 2.0" stroke="#172b4d" stroke-width="1.5" stroke-linecap="round"/><path d="M6.4 2.8 L7.6 1.6" stroke="#172b4d" stroke-width="2.1" stroke-linecap="round"/></svg>
<svg class="a" style="left:1024px;top:606.60px" width="9" height="11" viewBox="0 0 9 11" fill="none" stroke="#344563" stroke-width="1.05" stroke-linejoin="round">
<path d="M.8 3.2 L8.2 3.2 M1.8 3.0 L3.0 1.3 L6.0 1.3 L7.2 3.0"/>
<path d="M1.5 3.4 L1.6 9.6 Q1.7 10.4 2.5 10.4 L6.5 10.4 Q7.3 10.4 7.4 9.6 L7.5 3.4"/>
<path d="M3.3 5.0 L3.3 7.8 H4.3 V5.0 Z M4.8 5.0 L4.8 7.8 H5.8 V5.0 Z" fill="#344563" stroke="none"/>
</svg>
<div class="ln" style="top:625.60px"></div>
<div class="t" style="left:26.9px;transform-origin:left top;top:634.08px;font-size:7.074px;line-height:8.14px;color:#7a869a;font-weight:normal;transform:scaleX(0.9339);">Отображено 2 из 2</div>
</body></html>
